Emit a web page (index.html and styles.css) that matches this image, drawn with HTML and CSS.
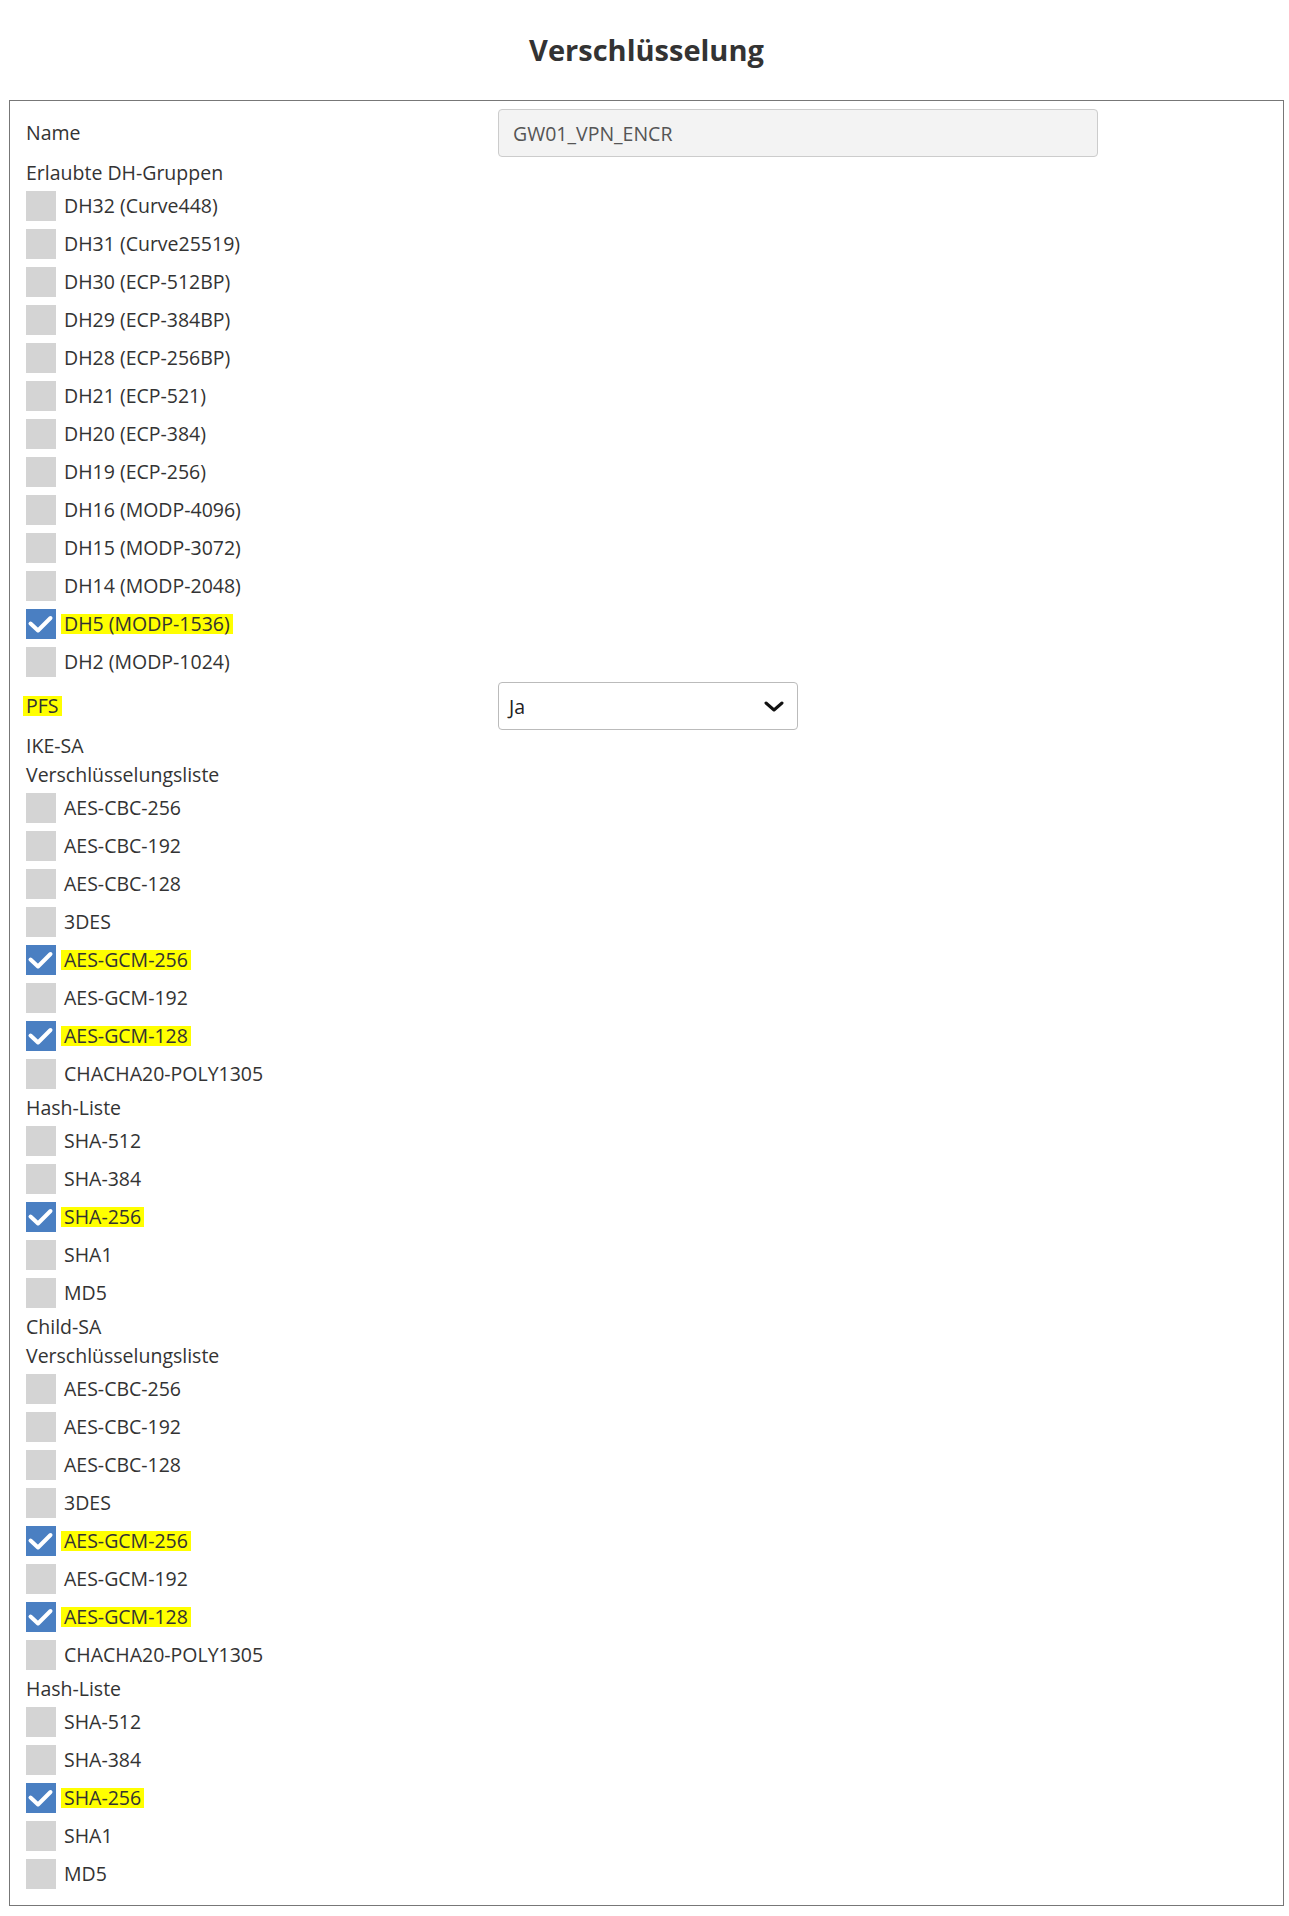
FILE: index.html
```html
<!DOCTYPE html>
<html lang="de">
<head>
<meta charset="utf-8">
<title>Verschlüsselung</title>
<link rel="stylesheet" href="styles.css">
</head>
<body>
<h1 class="title">Verschlüsselung</h1>
<div class="panel">
  <div class="field-row name-row">
    <span class="label">Name</span>
    <div class="text-input">GW01_VPN_ENCR</div>
  </div>

  <div class="group-label">Erlaubte DH-Gruppen</div>
  <div class="check-row"><span class="box"></span><span class="check-text">DH32 (Curve448)</span></div>
  <div class="check-row"><span class="box"></span><span class="check-text">DH31 (Curve25519)</span></div>
  <div class="check-row"><span class="box"></span><span class="check-text">DH30 (ECP-512BP)</span></div>
  <div class="check-row"><span class="box"></span><span class="check-text">DH29 (ECP-384BP)</span></div>
  <div class="check-row"><span class="box"></span><span class="check-text">DH28 (ECP-256BP)</span></div>
  <div class="check-row"><span class="box"></span><span class="check-text">DH21 (ECP-521)</span></div>
  <div class="check-row"><span class="box"></span><span class="check-text">DH20 (ECP-384)</span></div>
  <div class="check-row"><span class="box"></span><span class="check-text">DH19 (ECP-256)</span></div>
  <div class="check-row"><span class="box"></span><span class="check-text">DH16 (MODP-4096)</span></div>
  <div class="check-row"><span class="box"></span><span class="check-text">DH15 (MODP-3072)</span></div>
  <div class="check-row"><span class="box"></span><span class="check-text">DH14 (MODP-2048)</span></div>
  <div class="check-row"><span class="box checked"><svg viewBox="0 0 30 30" width="30" height="30"><polyline points="4.5,14.5 12,21.5 24.5,9" /></svg></span><span class="check-text"><mark class="hl">DH5 (MODP-1536)</mark></span></div>
  <div class="check-row"><span class="box"></span><span class="check-text">DH2 (MODP-1024)</span></div>

  <div class="field-row pfs-row">
    <span class="label"><mark class="hl">PFS</mark></span>
    <div class="select">
      <span>Ja</span>
      <svg class="chevron" viewBox="0 0 20 11" width="20" height="11"><polyline points="2,2 10,9 18,2" /></svg>
    </div>
  </div>

  <div class="group-label">IKE-SA</div>
  <div class="group-label">Verschlüsselungsliste</div>
  <div class="check-row"><span class="box"></span><span class="check-text">AES-CBC-256</span></div>
  <div class="check-row"><span class="box"></span><span class="check-text">AES-CBC-192</span></div>
  <div class="check-row"><span class="box"></span><span class="check-text">AES-CBC-128</span></div>
  <div class="check-row"><span class="box"></span><span class="check-text">3DES</span></div>
  <div class="check-row"><span class="box checked"><svg viewBox="0 0 30 30" width="30" height="30"><polyline points="4.5,14.5 12,21.5 24.5,9" /></svg></span><span class="check-text"><mark class="hl">AES-GCM-256</mark></span></div>
  <div class="check-row"><span class="box"></span><span class="check-text">AES-GCM-192</span></div>
  <div class="check-row"><span class="box checked"><svg viewBox="0 0 30 30" width="30" height="30"><polyline points="4.5,14.5 12,21.5 24.5,9" /></svg></span><span class="check-text"><mark class="hl">AES-GCM-128</mark></span></div>
  <div class="check-row"><span class="box"></span><span class="check-text">CHACHA20-POLY1305</span></div>
  <div class="group-label">Hash-Liste</div>
  <div class="check-row"><span class="box"></span><span class="check-text">SHA-512</span></div>
  <div class="check-row"><span class="box"></span><span class="check-text">SHA-384</span></div>
  <div class="check-row"><span class="box checked"><svg viewBox="0 0 30 30" width="30" height="30"><polyline points="4.5,14.5 12,21.5 24.5,9" /></svg></span><span class="check-text"><mark class="hl">SHA-256</mark></span></div>
  <div class="check-row"><span class="box"></span><span class="check-text">SHA1</span></div>
  <div class="check-row"><span class="box"></span><span class="check-text">MD5</span></div>

  <div class="group-label">Child-SA</div>
  <div class="group-label">Verschlüsselungsliste</div>
  <div class="check-row"><span class="box"></span><span class="check-text">AES-CBC-256</span></div>
  <div class="check-row"><span class="box"></span><span class="check-text">AES-CBC-192</span></div>
  <div class="check-row"><span class="box"></span><span class="check-text">AES-CBC-128</span></div>
  <div class="check-row"><span class="box"></span><span class="check-text">3DES</span></div>
  <div class="check-row"><span class="box checked"><svg viewBox="0 0 30 30" width="30" height="30"><polyline points="4.5,14.5 12,21.5 24.5,9" /></svg></span><span class="check-text"><mark class="hl">AES-GCM-256</mark></span></div>
  <div class="check-row"><span class="box"></span><span class="check-text">AES-GCM-192</span></div>
  <div class="check-row"><span class="box checked"><svg viewBox="0 0 30 30" width="30" height="30"><polyline points="4.5,14.5 12,21.5 24.5,9" /></svg></span><span class="check-text"><mark class="hl">AES-GCM-128</mark></span></div>
  <div class="check-row"><span class="box"></span><span class="check-text">CHACHA20-POLY1305</span></div>
  <div class="group-label">Hash-Liste</div>
  <div class="check-row"><span class="box"></span><span class="check-text">SHA-512</span></div>
  <div class="check-row"><span class="box"></span><span class="check-text">SHA-384</span></div>
  <div class="check-row"><span class="box checked"><svg viewBox="0 0 30 30" width="30" height="30"><polyline points="4.5,14.5 12,21.5 24.5,9" /></svg></span><span class="check-text"><mark class="hl">SHA-256</mark></span></div>
  <div class="check-row"><span class="box"></span><span class="check-text">SHA1</span></div>
  <div class="check-row"><span class="box"></span><span class="check-text">MD5</span></div>
</div>
</body>
</html>
```

FILE: styles.css
```css
html, body {
  margin: 0;
  padding: 0;
  background: #ffffff;
}

body {
  font-family: "Open Sans", "Noto Sans", "Liberation Sans", sans-serif;
  font-size: 19.5px;
  color: #333333;
}

.title {
  margin: 0;
  padding-top: 30px;
  width: 1275px;
  margin-left: 9px;
  font-size: 29px;
  line-height: 40px;
  font-weight: 700;
  text-align: center;
  color: #333333;
}

.panel {
  box-sizing: border-box;
  width: 1275px;
  margin: 30px 0 0 9px;
  border: 1px solid #777777;
  padding: 8px 16px 12px 16px;
}

.field-row {
  display: grid;
  grid-template-columns: 472px auto;
  align-items: center;
  justify-content: start;
}

.name-row {
  height: 48px;
  margin-bottom: 1px;
}

.pfs-row {
  height: 50px;
}

.label,
.group-label,
.check-text {
  line-height: 29px;
}

.group-label {
  height: 29px;
}

.check-text,
.label {
  transform: translateY(-1px);
}

.text-input {
  box-sizing: border-box;
  width: 600px;
  height: 48px;
  padding: 0 14px;
  display: flex;
  align-items: center;
  background: #f3f3f3;
  border: 1px solid #cccccc;
  border-radius: 4px;
  color: #555555;
}

.select {
  box-sizing: border-box;
  width: 300px;
  height: 48px;
  padding: 0 13px 0 10px;
  display: flex;
  align-items: center;
  justify-content: space-between;
  background: #ffffff;
  border: 1px solid #bbbbbb;
  border-radius: 4px;
  color: #222222;
}

.chevron polyline {
  fill: none;
  stroke: #111111;
  stroke-width: 3;
  stroke-linecap: round;
  stroke-linejoin: round;
}

.check-row {
  height: 38px;
  display: flex;
  align-items: center;
  gap: 8px;
}

.box {
  width: 30px;
  height: 30px;
  flex: 0 0 30px;
  background: #d4d4d4;
  display: block;
}

.box.checked {
  background: #4a7fc2;
}

.box svg {
  display: block;
}

.box polyline {
  fill: none;
  stroke: #ffffff;
  stroke-width: 4;
  stroke-linecap: round;
  stroke-linejoin: round;
}

.hl {
  color: inherit;
  background-color: transparent;
  background-image: linear-gradient(#ffff00, #ffff00);
  background-repeat: no-repeat;
  background-size: 100% 20px;
  background-position: 0 4px;
  padding: 0 3px;
  margin: 0 -3px;
}
```
